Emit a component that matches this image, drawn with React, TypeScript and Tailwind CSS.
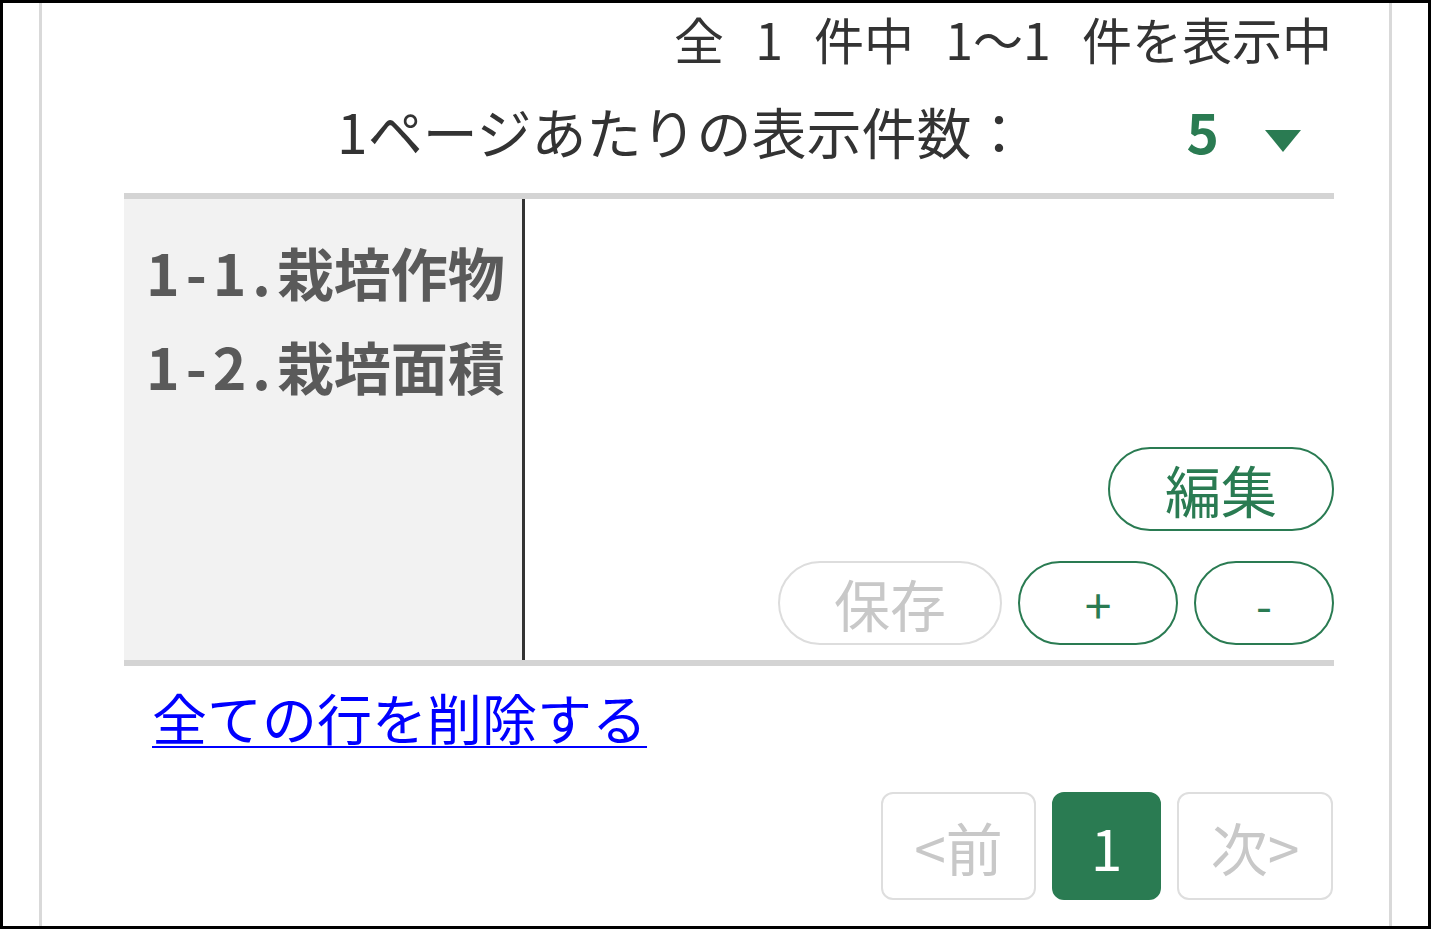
const font = { fontFamily: '"Noto Sans CJK JP", "Noto Sans", sans-serif' };

function Pill({
  children,
  disabled,
  className,
}: {
  children: React.ReactNode;
  disabled?: boolean;
  className?: string;
}) {
  return (
    <button
      className={
        "flex h-[84px] items-center justify-center rounded-full border-2 bg-white text-[56px] leading-none " +
        (disabled
          ? "border-[#dddddd] text-[#c8c8c8] "
          : "border-[#2a7b52] text-[#2a7b52] ") +
        (className ?? "")
      }
    >
      {children}
    </button>
  );
}

function PageBox({
  children,
  active,
  className,
}: {
  children: React.ReactNode;
  active?: boolean;
  className?: string;
}) {
  return (
    <div
      className={
        "flex h-[108px] items-center justify-center rounded-[12px] border-2 text-[57px] leading-none " +
        (active
          ? "border-[#2a7b52] bg-[#2a7b52] text-white "
          : "border-[#dedede] bg-white text-[#c8c8c8] ") +
        (className ?? "")
      }
    >
      {children}
    </div>
  );
}

export default function App() {
  return (
    <div
      className="box-border flex h-[929px] w-[1431px] border-[3px] border-black bg-white text-[#333333]"
      style={font}
    >
      <div className="w-[36px] shrink-0" />
      <div className="w-[3px] shrink-0 bg-[#d9d9d9]" />
      <div className="flex w-[1347px] shrink-0 flex-col pl-[82px] pr-[55px]">
        {/* count summary */}
        <div className="flex h-[70px] items-center justify-end pr-[2px] text-[50px] leading-none [word-spacing:20px]">
          全 1 件中 1〜1 件を表示中
        </div>
        {/* per page */}
        <div className="flex h-[110px] items-center justify-end pt-[4px] text-[55px] leading-none">
          <span>1ページあたりの表示件数：</span>
          <span className="ml-[160px] font-bold text-[#2a7b52]">5</span>
          <svg className="ml-[46px] mr-[33px] mt-[22px]" width="36" height="22" viewBox="0 0 36 22">
            <path d="M0 0 H36 L18 22 Z" fill="#2a7b52" />
          </svg>
        </div>
        {/* table */}
        <div className="mt-[10px] flex h-[473px] border-y-[6px] border-[#d4d4d4]">
          <div className="w-[398px] shrink-0 bg-[#f2f2f2] pl-[22px] pt-[25px] text-[57px] font-bold leading-[94px] text-[#5a5a5a]">
            <div>
              <span className="tracking-[6px]">1-1.</span>栽培作物
            </div>
            <div>
              <span className="tracking-[6px]">1-2.</span>栽培面積
            </div>
          </div>
          <div className="w-[3px] shrink-0 bg-[#333333]" />
          <div className="flex flex-1 flex-col items-end justify-end gap-[30px] pb-[15px]">
            <Pill className="w-[226px]">編集</Pill>
            <div className="flex gap-[16px]">
              <Pill disabled className="w-[224px]">
                保存
              </Pill>
              <Pill className="w-[160px] !text-[48px]">+</Pill>
              <Pill className="w-[140px] !text-[46px]">-</Pill>
            </div>
          </div>
        </div>
        {/* delete all */}
        <div className="pl-[28px] pt-[14px]">
          <a
            href="#"
            className="text-[55px] leading-[72px] text-[#0000ff] underline decoration-2 underline-offset-[6px]"
          >
            全ての行を削除する
          </a>
        </div>
        {/* pagination */}
        <div className="mt-[40px] flex justify-end gap-[16px] pr-px">
          <PageBox className="w-[155px]">&lt;前</PageBox>
          <PageBox active className="w-[109px]">
            1
          </PageBox>
          <PageBox className="w-[156px]">次&gt;</PageBox>
        </div>
      </div>
      <div className="w-[3px] shrink-0 bg-[#d9d9d9]" />
    </div>
  );
}
